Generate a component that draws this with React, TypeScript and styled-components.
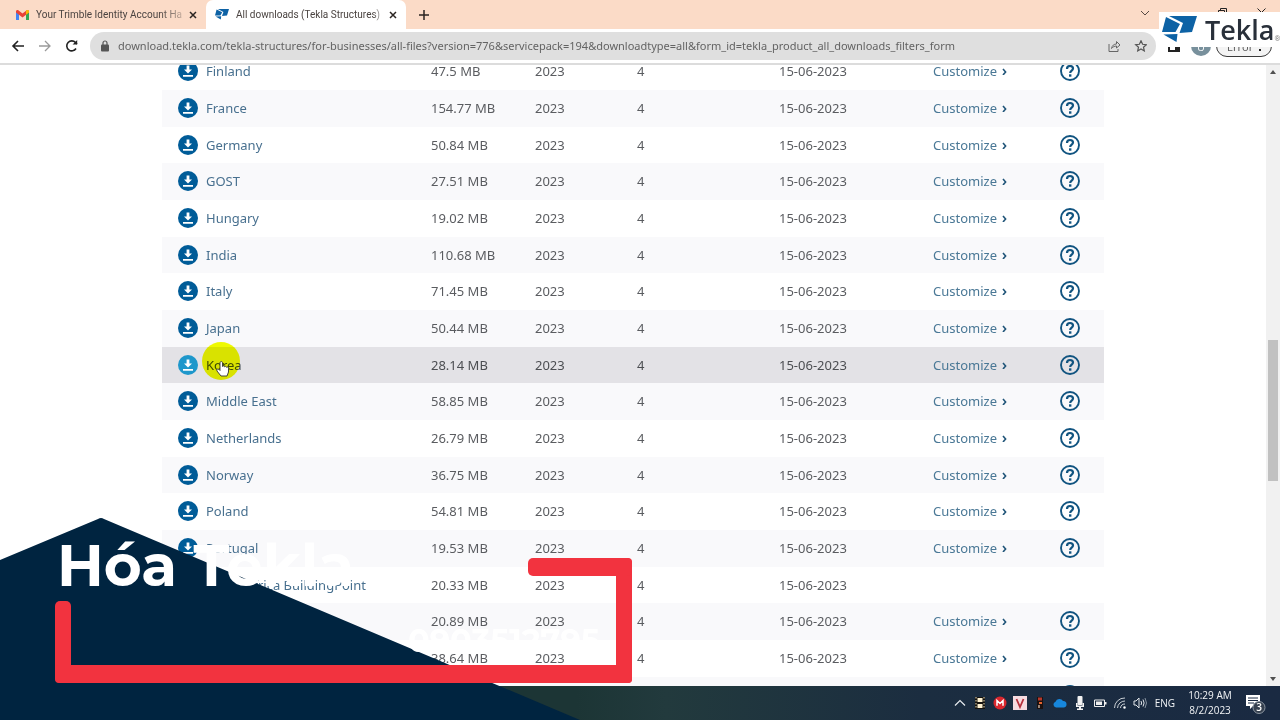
import React from 'react';
import styled, { createGlobalStyle, css } from 'styled-components';

const ui = '"Open Sans", "Noto Sans", sans-serif';
const display = 'Montserrat, "Open Sans", sans-serif';

const GlobalStyle = createGlobalStyle`
  *, *::before, *::after { box-sizing: border-box; }
  body { margin: 0; background: #fff; font-family: ${ui}; overflow: hidden; }
  button { border: 0; padding: 0; background: none; font: inherit; color: inherit; }
  svg { display: block; flex: none; }
`;

const Screen = styled.div`
  position: relative;
  display: flex;
  flex-direction: column;
  height: 100vh;
  overflow: hidden;
`;

/* Browser tabs */
const TabStrip = styled.header`
  display: flex;
  flex: none;
  align-items: stretch;
  height: 29px;
  background: #fbdbc7;
`;
const Tab = styled.div<{ $active?: boolean }>`
  display: flex;
  align-items: center;
  gap: 7px;
  width: ${p => (p.$active ? 200 : 206)}px;
  padding: 0 9px 0 ${p => (p.$active ? 9 : 16)}px;
  font: 10px/16px Roboto, sans-serif;
  color: #4a4340;
  background: ${p => (p.$active ? '#fff' : 'transparent')};
  border-radius: 7px 7px 0 0;
`;
const TabTitle = styled.span<{ $fade: string }>`
  flex: 1;
  min-width: 0;
  white-space: nowrap;
  mask-image: linear-gradient(90deg, #000 ${p => p.$fade}, rgba(0, 0, 0, 0.3));
`;
const IconButton = styled.button`
  display: grid;
  place-items: center;
  flex: none;
`;
const NewTab = styled(IconButton)`
  width: 36px;
`;
const WindowControls = styled.div`
  display: flex;
  align-items: center;
  gap: 30px;
  margin-left: auto;
  padding: 0 14px 4px 0;
`;

/* Address row */
const Toolbar = styled.nav`
  display: flex;
  flex: none;
  align-items: center;
  height: 36px;
  padding: 0 8px 0 10px;
  gap: 10px;
  background: #fff;
  border-bottom: 2px solid #dcdcdc;
`;
const Address = styled.div`
  display: flex;
  flex: 1;
  align-items: center;
  height: 28px;
  padding: 0 9px 0 10px;
  gap: 8px;
  border-radius: 14px;
  background: #dfdfdf;
`;
const UrlInput = styled.input`
  flex: 1;
  min-width: 0;
  padding: 0;
  border: 0;
  background: none;
  font: 11px/20px "Noto Sans", "Open Sans", sans-serif;
  color: #636363;
  outline: 0;
`;
const BrowserActions = styled.div`
  display: flex;
  align-items: center;
  gap: 5px;
  padding-left: 2px;
`;
const SidePanelButton = styled(IconButton)`
  padding-right: 6px;
`;
const Avatar = styled.span`
  display: grid;
  place-items: center;
  width: 20px;
  height: 20px;
  border-radius: 50%;
  background: #78909c;
  color: #fff;
  font-size: 11px;
`;
const ErrorChip = styled.button`
  display: flex;
  align-items: center;
  justify-content: space-between;
  width: 56px;
  height: 22px;
  padding: 0 10px;
  border: 1px solid #3a3a3a;
  border-radius: 11px;
  background: #f4f4f4;
  color: #555;
  font-size: 11px;
`;

/* Page */
const Viewport = styled.div`
  display: flex;
  flex: 1;
  min-height: 0;
`;
const Page = styled.main`
  flex: 1;
  min-width: 0;
  overflow: hidden;
`;
const Files = styled.table`
  width: 942px;
  margin: -12px auto 0;
  border-collapse: collapse;
  table-layout: fixed;
  font: 13px/20px "Noto Sans", "Open Sans", sans-serif;
  color: #5a5c60;
`;
const FileRow = styled.tr<{ $hover?: boolean }>`
  height: 37px;
  &:nth-child(3n) { height: 36px; }
  &:nth-child(even) { background: #f9f9fb; }
  ${p => p.$hover && css`&&:nth-child(n) { background: #e3e2e6; color: #4c4e52; }`}
`;
const Cell = styled.td`
  padding: 0 0 1px;
  white-space: nowrap;
`;
const FileLink = styled.a<{ $dark?: boolean }>`
  display: flex;
  align-items: center;
  gap: 8px;
  padding-left: 16px;
  color: ${p => (p.$dark ? '#3f4a52' : '#48708f')};
  text-decoration: none;
`;
const CustomizeLink = styled.a`
  display: flex;
  align-items: center;
  gap: 5px;
  color: #4a7896;
  text-decoration: none;
`;
const ScrollBar = styled.div`
  display: flex;
  flex-direction: column;
  align-items: center;
  width: 14px;
  padding: 4px 0;
  background: #f1f1f1;
`;
const ThumbTrack = styled.div`
  display: flex;
  flex: 1;
  flex-direction: column;
  width: 10px;
  &::before { content: ''; flex: 262; }
  &::after { content: ''; flex: 193; }
`;
const Thumb = styled.div`
  flex: 140;
  background: #c1c1c1;
`;

/* Taskbar */
const Taskbar = styled.footer`
  display: flex;
  flex: none;
  align-items: center;
  justify-content: flex-end;
  gap: 8px;
  height: 34px;
  padding-right: 13px;
  background: linear-gradient(90deg, #1c3535 45%, #223a3d 52%, #1b2d40 72%, #1a2a42);
  color: #f2f4f6;
  font-size: 10px;
  line-height: 15px;
`;
const Tray = styled.div`
  display: flex;
  align-items: center;
  gap: 6px;
`;
const Clock = styled.time`
  width: 54px;
  text-align: center;
  white-space: nowrap;
`;

/* Layers over the recording */
const BrandMark = styled.div`
  position: absolute;
  top: 12px;
  right: 0;
  display: flex;
  align-items: center;
  gap: 8px;
  width: 121px;
  height: 35px;
  padding-left: 3px;
  background: #fff;
  color: #29303a;
  font: 600 27px/34px ${ui};
`;
const Registered = styled.small`
  align-self: flex-end;
  margin-left: -8px;
  font: 400 7px/16px ${ui};
  color: #777;
`;
const Pointer = styled.svg`
  position: absolute;
  top: 342px;
  left: 201px;
`;
const Halo = styled.circle`
  mix-blend-mode: multiply;
`;
const Banner = styled.svg`
  position: absolute;
  left: 0;
  bottom: 0;
`;
const BannerTitle = styled.h1`
  position: absolute;
  left: 57px;
  bottom: 119px;
  margin: 0;
  color: #fff;
  font: 700 58px/70px ${display};
  white-space: nowrap;
`;
const BannerNote = styled.p`
  position: absolute;
  left: 408px;
  bottom: 61px;
  margin: 0;
  color: #fff;
  font: 700 32px/36px ${display};
`;

const DownloadIcon = ({ light }: { light?: boolean }) => (
  <svg width="20" height="20" viewBox="0 0 20 20">
    <circle cx="10" cy="10" r="10" fill={light ? '#1e97cb' : '#005c98'} />
    <path d="M8.6 4.500h2.800v4h2.600l-4 4-4-4h2.600zM5 14h10v1.700H5z" fill="#fff" />
  </svg>
);
const HelpIcon = () => (
  <svg width="20" height="20" viewBox="0 0 20 20" fill="none" stroke="#115480">
    <circle cx="10" cy="10" r="9" strokeWidth="1.900" />
    <path d="M7 8c0-1.900 1.200-3 3-3s3 1 3 2.600c0 2-2.800 2-2.800 4.400" strokeWidth="2.200" />
    <path d="M10.200 13.300v2.400" strokeWidth="2.400" />
  </svg>
);
const Chevron = () => (
  <svg width="5" height="8" viewBox="0 0 5 8" fill="none" stroke="#1f5478" strokeWidth="1.600">
    <path d="M1 2l2.600 3L1 8" />
  </svg>
);
const TeklaLogo = ({ width, height }: { width: number; height: number }) => (
  <svg width={width} height={height} viewBox="0 0 35 27" fill="#0d62a5">
    <path d="M4 1l14 7-4.500 8H0z" />
    <path d="M7 0h28l-5 16-12.500 1L21 7z" />
    <path d="M1.500 18.500L15.500 18 14.500 26z" />
  </svg>
);
const Close = () => (
  <svg width="8" height="8" viewBox="0 0 8 8" stroke="#2b2522" strokeWidth="1.500"><path d="M1 1l6 6M7 1L1 7" /></svg>
);

type File = [name: string, size: string];
const files: File[] = [
  ['Finland', '47.5 MB'], ['France', '154.77 MB'], ['Germany', '50.84 MB'], ['GOST', '27.51 MB'],
  ['Hungary', '19.02 MB'], ['India', '110.68 MB'], ['Italy', '71.45 MB'], ['Japan', '50.44 MB'],
  ['Korea', '28.14 MB'], ['Middle East', '58.85 MB'], ['Netherlands', '26.79 MB'], ['Norway', '36.75 MB'],
  ['Poland', '54.81 MB'], ['Portugal', '19.53 MB'], ['South Africa BuildingPoint', '20.33 MB'],
  ['South America', '20.89 MB'], ['Spain', '38.64 MB'], ['Sweden', '61.20 MB'],
];
const columns = [269, 104, 102, 142, 154, 127, 44];

export default function App() {
  return (
    <Screen>
      <GlobalStyle />
      <TabStrip>
        <Tab>
          <svg width="13" height="10" viewBox="0 0 13 10">
            <path d="M0 1.200V10h3V4z" fill="#4285f4" />
            <path d="M13 1.200V10h-3V4z" fill="#34a853" />
            <path d="M0 1.500C0 0 1.600-.4 2.600.5l3.900 3 3.900-3C11.400-.4 13 0 13 1.500v1L6.500 7.500 0 2.500z" fill="#ea4335" />
            <path d="M10 .8l.4-.3C11.400-.4 13 0 13 1.500v1L10 4.800z" fill="#fbbc04" />
          </svg>
          <TabTitle $fade="85%">Your Trimble Identity Account Ha</TabTitle>
          <IconButton aria-label="Close tab"><Close /></IconButton>
        </Tab>
        <Tab $active>
          <TeklaLogo width={14} height={11} />
          <TabTitle $fade="94%">All downloads (Tekla Structures) |</TabTitle>
          <IconButton aria-label="Close tab"><Close /></IconButton>
        </Tab>
        <NewTab aria-label="New tab">
          <svg width="10" height="10" viewBox="0 0 10 10" stroke="#2b2522" strokeWidth="1.500"><path d="M5 0v10M0 5h10" /></svg>
        </NewTab>
        <WindowControls>
          <IconButton aria-label="Search tabs">
            <svg width="10" height="6" viewBox="0 0 10 6" fill="none" stroke="#574a44"><path d="M1 1l4 4 4-4" /></svg>
          </IconButton>
          <IconButton aria-label="Minimize">
            <svg width="8" height="8" viewBox="0 0 8 8" stroke="#222"><path d="M0 7.500h8" /></svg>
          </IconButton>
          <IconButton aria-label="Restore">
            <svg width="9" height="9" viewBox="0 0 9 9" fill="none" stroke="#222"><path d="M.5 2.500h6v6h-6zM2.500 2.500v-2h6v6h-2" /></svg>
          </IconButton>
          <IconButton aria-label="Close window">
            <svg width="9" height="9" viewBox="0 0 9 9" stroke="#222"><path d="M.5.5l8 8M8.500.5l-8 8" /></svg>
          </IconButton>
        </WindowControls>
      </TabStrip>

      <Toolbar>
        <IconButton aria-label="Back">
          <svg width="17" height="14" viewBox="0 0 17 14" fill="none" stroke="#222" strokeWidth="1.600"><path d="M14 7H3.500M8 2L3 7l5 5" /></svg>
        </IconButton>
        <IconButton aria-label="Forward">
          <svg width="17" height="14" viewBox="0 0 17 14" fill="none" stroke="#9a9a9a" strokeWidth="1.300"><path d="M2 7h10.500M8 2l5 5-5 5" /></svg>
        </IconButton>
        <IconButton aria-label="Reload">
          <svg width="16" height="14" viewBox="0 0 16 14" fill="none" stroke="#222" strokeWidth="1.600"><path d="M12 9.500A5 5 0 1 1 11.500 3.500L13 5" /><path d="M13.200 1v4.600H8.600z" fill="#222" stroke="none" /></svg>
        </IconButton>
        <Address>
          <svg width="10" height="12" viewBox="0 0 10 12"><rect x="1" y="4.500" width="8" height="7" rx="1" fill="#555" /><path d="M3 5V3a2 2 0 0 1 4 0v2" fill="none" stroke="#555" strokeWidth="1.200" /></svg>
          <UrlInput aria-label="Address" readOnly value="download.tekla.com/tekla-structures/for-businesses/all-files?version=776&servicepack=194&downloadtype=all&form_id=tekla_product_all_downloads_filters_form" />
          <svg width="13" height="12" viewBox="0 0 13 12" fill="none" stroke="#666"><path d="M1 4v7.500h9V9" /><path d="M3.500 8.500C4 5.500 6 4 8.500 4V1.500L12 5 8.500 8V6C6.500 6 5 6.800 3.500 8.500z" /></svg>
          <svg width="18" height="12" viewBox="-6 0 18 12" fill="none" stroke="#555" strokeWidth="1.200"><path d="M6 .8l1.600 3.500 3.700.4-2.800 2.500.8 3.700L6 9l-3.300 1.900.8-3.700L.7 4.700l3.700-.4z" /></svg>
        </Address>
        <BrowserActions>
          <SidePanelButton aria-label="Side panel">
            <svg width="12" height="12" viewBox="0 0 12 12" fill="none" stroke="#222" strokeWidth="2"><path d="M1 1h10v10H1z" /><path d="M9 1v10" strokeWidth="4" /></svg>
          </SidePanelButton>
          <Avatar>U</Avatar>
          <ErrorChip><span>Error</span><svg width="2" height="11" viewBox="0 0 2 11" fill="#222"><path d="M0 0h2v2H0zM0 4h2v2H0zM0 8h2v2H0z" /></svg></ErrorChip>
        </BrowserActions>
      </Toolbar>

      <Viewport>
        <Page>
          <Files>
            <colgroup>{columns.map((w, i) => <col key={i} width={w} />)}</colgroup>
            <tbody>
              {files.map(([name, size]) => (
                <FileRow key={name} $hover={name === 'Korea'}>
                  <Cell><FileLink href="#" $dark={name === 'Korea'}><DownloadIcon light={name === 'Korea'} />{name}</FileLink></Cell>
                  <Cell>{size}</Cell>
                  <Cell>2023</Cell>
                  <Cell>4</Cell>
                  <Cell>15-06-2023</Cell>
                  <Cell>{!name.includes('Building') && <CustomizeLink href="#">Customize <Chevron /></CustomizeLink>}</Cell>
                  <Cell>{!name.includes('Building') && <HelpIcon />}</Cell>
                </FileRow>
              ))}
            </tbody>
          </Files>
        </Page>
        <ScrollBar>
          <svg width="6" height="6" viewBox="0 0 6 6" fill="#505050"><path d="M0 5h6L3 1z" /></svg>
          <ThumbTrack><Thumb /></ThumbTrack>
          <svg width="6" height="6" viewBox="0 0 6 6" fill="#505050"><path d="M0 1h6L3 5z" /></svg>
        </ScrollBar>
      </Viewport>

      <Taskbar>
        <Tray>
          <svg width="14" height="14" viewBox="0 0 14 14" fill="none" stroke="#e8ecef" strokeWidth="1.200"><path d="M2 9.500l5-5 5 5" /></svg>
          <svg width="14" height="14" viewBox="0 0 14 14"><path d="M2 1h10v12H2z" fill="#15120e" /><path d="M4.500 2h5v4h-5zM4.500 8h5v4h-5z" fill="#fff3d2" /><path d="M3 1v12M11 1v12" stroke="#eadfb9" strokeDasharray="1.500 1.500" /></svg>
          <svg width="14" height="14" viewBox="0 0 14 14"><circle cx="7" cy="7" r="6.500" fill="#d9272e" /><path d="M4 9.800V4.500l3 3 3-3v5.300" fill="none" stroke="#fff" strokeWidth="1.500" /></svg>
          <svg width="14" height="14" viewBox="0 0 14 14"><path d="M0 0h14v14H0z" fill="#f6dbe0" /><path d="M3.500 3L7 11l3.500-8" fill="none" stroke="#b52f3b" strokeWidth="1.800" /></svg>
          <svg width="14" height="14" viewBox="0 0 14 14"><path d="M4 1h6v12H4z" fill="#1c1210" /><path d="M5 1.500h4v3H5z" fill="#b8392c" /><path d="M6 6h3v2H6z" fill="#e5652f" /><path d="M5 9h2v3H5z" fill="#9a8576" /></svg>
          <svg width="14" height="14" viewBox="0 0 14 14"><path d="M3 11.500a3 3 0 0 1-.5-5.800A4.200 4.200 0 0 1 10 5a3.300 3.300 0 0 1 1 6.500z" fill="#1787dc" /></svg>
          <svg width="14" height="14" viewBox="0 0 14 14" fill="#f2f2f2"><rect x="4.500" y="0" width="5" height="9" rx="1" /><path d="M3 7h1.500v2.500h5V7H11v4H8v1.500h2V14H4v-1.500h2V11H3z" /></svg>
          <svg width="14" height="14" viewBox="0 0 14 14"><path d="M1.500 4h10v6.500h-10z" fill="none" stroke="#eee" /><path d="M3 5.500h6V9H3zM12 6h1.500v2.500H12z" fill="#eee" /></svg>
          <svg width="14" height="14" viewBox="0 0 14 14" fill="none" stroke="#c8ced4"><path d="M1.500 12A10 10 0 0 1 12 2M4.500 12A7.500 7.500 0 0 1 12 5M7.500 12A4.500 4.500 0 0 1 12 8" /><circle cx="11.500" cy="11.500" r="1" fill="#fff" /></svg>
          <svg width="14" height="14" viewBox="0 0 14 14" fill="none" stroke="#e2e6ea"><path d="M1 5h2l3-3v10L3 9H1zM8 5q1.200 2 0 4M10 3.500q2.200 3.500 0 7" /><path d="M12 2q3 5 0 10" stroke="#8793a0" /></svg>
        </Tray>
        <span>ENG</span>
        <Clock>10:29 AM<br />8/2/2023</Clock>
        <svg width="22" height="22" viewBox="0 0 22 22"><path d="M1 3h14v11H8l-3 3v-3H1z" fill="#fff" /><path d="M3 6h10M3 8.500h10M3 11h6" stroke="#1a2a42" /><circle cx="14" cy="15.500" r="6" fill="#35404f" stroke="#8d96a1" /><text x="14" y="19" textAnchor="middle" fill="#fff" fontSize="10" fontFamily="Open Sans" fontWeight="600">3</text></svg>
      </Taskbar>

      <BrandMark><TeklaLogo width={35} height={27} />Tekla<Registered>®</Registered></BrandMark>
      <Pointer width="40" height="40" viewBox="0 0 40 40">
        <Halo cx="20" cy="19" r="19" fill="#f4ff00" />
        <path d="M20 34l-4-5c-1-2 1-2.500 2-1.500l1 1V21c0-2 2.500-2 2.500 0v3.500c.5-1 1.800-.8 2 .3.600-.8 1.800-.5 2 .5.700-.7 2-.2 2 1V30l-1.500 4z" fill="#fff" stroke="#333" strokeWidth=".9" />
      </Pointer>
      <Banner width="640" height="202" viewBox="0 0 640 202">
        <path d="M0 42L98 1q3-2 6 0L580 202H0z" fill="#002440" />
        <g fill="#f2333f">
          <rect x="55" y="83" width="16" height="82" rx="5" />
          <rect x="55" y="147" width="577" height="18" rx="4" />
          <rect x="616" y="40" width="16" height="125" rx="4" />
          <rect x="528" y="40" width="104" height="18" rx="5" />
        </g>
      </Banner>
      <BannerTitle>Hóa Tekla</BannerTitle>
      <BannerNote>0903512795</BannerNote>
    </Screen>
  );
}
